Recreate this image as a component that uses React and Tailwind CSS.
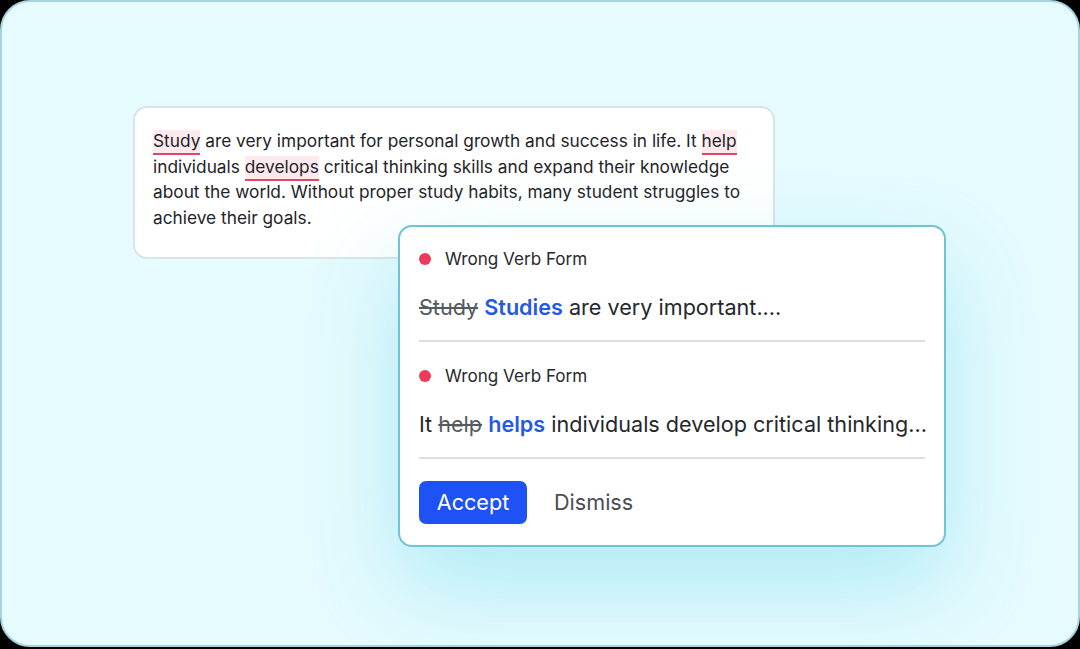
import React from "react";

const F = { fontFamily: "Inter, 'Noto Sans', sans-serif" };

function Mark({ children }) {
  return (
    <span className="bg-[#fdeaee] border-b-2 border-[#e34562] pb-[2px]">{children}</span>
  );
}

function Heading() {
  return (
    <div className="flex items-center gap-[14px] h-[20px]">
      <span className="w-[12px] h-[12px] rounded-full bg-[#ec3b59]" />
      <span className="text-[17.1px] text-[#27292d]">Wrong Verb Form</span>
    </div>
  );
}

export default function App() {
  return (
    <div className="w-[1080px] h-[649px] bg-black" style={F}>
      <div className="relative w-[1080px] h-[647px] rounded-[30px] border-2 border-[#a6d3dd] bg-[#e6fbfe] overflow-hidden">
        <div className="absolute left-[131px] top-[104px] w-[642px] h-[153px] rounded-[14px] border-2 border-[#d9e4e8] bg-white pl-[18px] pr-[12px] pt-[20px]">
          <p className="text-[17.3px] leading-[25.7px] text-[#1f2328]">
            <Mark>Study</Mark> are very important for personal growth and success in life. It <Mark>help</Mark>{" "}
            individuals <Mark>develops</Mark> critical thinking skills and expand their knowledge about the world. Without proper study habits, many student struggles to achieve their goals.
          </p>
        </div>
        <div className="absolute left-[396px] top-[223px] w-[548px] h-[322px] rounded-[14px] border-2 border-[#6ec4d6] bg-white px-[19px] shadow-[0_40px_90px_rgba(110,215,240,0.45)]">
          <div className="pt-[22px]">
            <Heading />
          </div>
          <div className="mt-[24px] whitespace-nowrap text-[21.6px] leading-[28px] text-[#25272b] pb-[19px] border-b-2 border-[#dcdedf]">
            <span className="line-through text-[#555a60]">Study</span>{" "}
            <span className="font-semibold text-[#2458e6]">Studies</span> are very important....
          </div>
          <div className="pt-[24px]">
            <Heading />
          </div>
          <div className="mt-[24px] whitespace-nowrap text-[21.6px] leading-[28px] text-[#25272b] pb-[19px] border-b-2 border-[#dcdedf]">
            It <span className="line-through text-[#555a60]">help</span>{" "}
            <span className="font-semibold text-[#2458e6]">helps</span> individuals develop critical thinking...
          </div>
          <div className="flex items-center gap-[27px] pt-[22px]">
            <button className="h-[43px] w-[108px] rounded-[7px] bg-[#1f52f5] text-white text-[21.6px]">Accept</button>
            <span className="text-[21.6px] text-[#4a4e54]">Dismiss</span>
          </div>
        </div>
      </div>
    </div>
  );
}
